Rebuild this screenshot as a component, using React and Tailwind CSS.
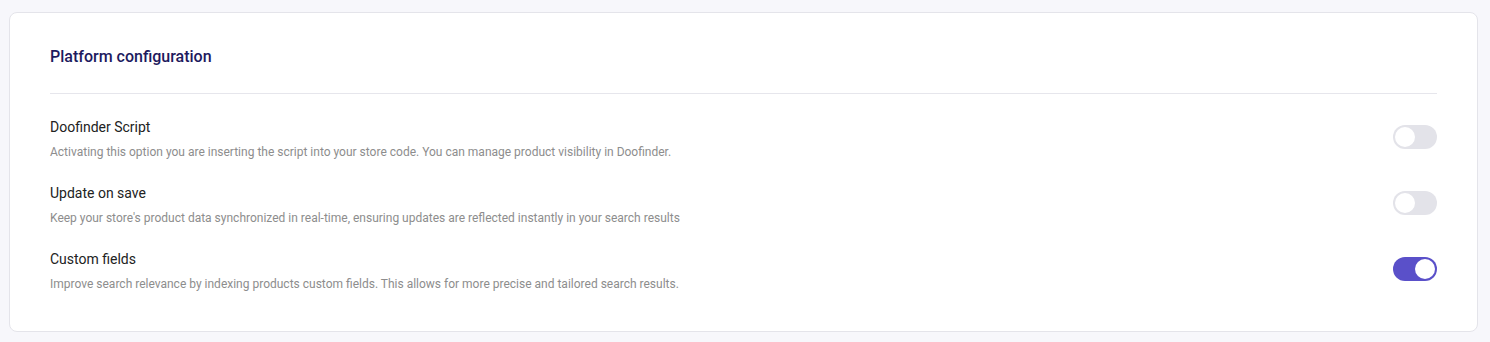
import { useState } from 'react'

const options = [
  {
    key: 'script',
    title: 'Doofinder Script',
    description:
      'Activating this option you are inserting the script into your store code. You can manage product visibility in Doofinder.',
    enabled: false,
  },
  {
    key: 'save',
    title: 'Update on save',
    description:
      "Keep your store's product data synchronized in real-time, ensuring updates are reflected instantly in your search results",
    enabled: false,
  },
  {
    key: 'fields',
    title: 'Custom fields',
    description:
      'Improve search relevance by indexing products custom fields. This allows for more precise and tailored search results.',
    enabled: true,
  },
]

function Toggle({ checked, onChange }) {
  return (
    <button
      type="button"
      role="switch"
      aria-checked={checked}
      onClick={() => onChange(!checked)}
      className={`relative mt-2 inline-flex h-6 w-11 shrink-0 items-center rounded-full transition-colors ${
        checked ? 'bg-[#5a50c9]' : 'bg-[#e3e3e9]'
      }`}
    >
      <span
        className={`inline-block h-5 w-5 rounded-full bg-white transition-transform ${
          checked ? 'translate-x-[22px]' : 'translate-x-[2px]'
        }`}
      />
    </button>
  )
}

export default function App() {
  const [state, setState] = useState(
    Object.fromEntries(options.map((o) => [o.key, o.enabled]))
  )

  return (
    <div className="min-h-screen bg-[#f7f7fb] pl-[9px] pr-3 pt-3 pb-[10px] font-['Roboto',sans-serif]">
      <div className="rounded-lg border border-[#e4e4ea] bg-white px-10">
        {/* Header */}
        <div className="border-b border-[#e6e6ec] pt-8 pb-6">
          <h2 className="text-base leading-6 font-medium text-[#1d1a5e]">Platform configuration</h2>
        </div>

        {/* Options */}
        <div className="flex flex-col gap-[23px] pt-[23px] pb-[39px]">
          {options.map((o) => (
            <div key={o.key} className="flex items-start justify-between gap-6">
              <div>
                <p className="text-sm leading-5 text-[#222222]">{o.title}</p>
                <p className="mt-[7px] text-xs leading-4 text-[#8d8d8d]">{o.description}</p>
              </div>
              <Toggle
                checked={state[o.key]}
                onChange={(v) => setState((s) => ({ ...s, [o.key]: v }))}
              />
            </div>
          ))}
        </div>
      </div>
    </div>
  )
}
